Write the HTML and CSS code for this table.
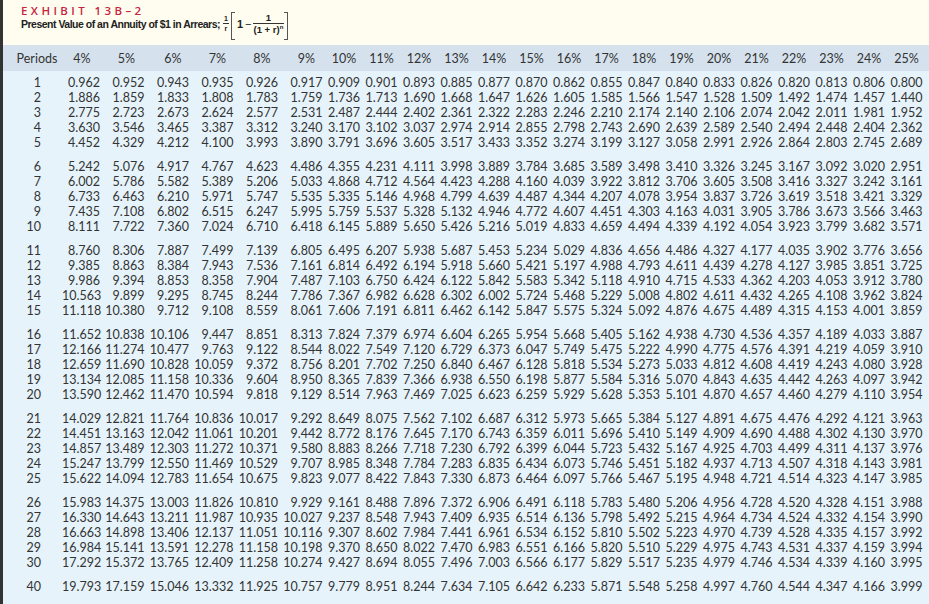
FILE: index.html
```html
<!DOCTYPE html>
<html lang="en">
<head>
<meta charset="utf-8">
<title>Exhibit 13B-2</title>
<link rel="stylesheet" href="styles.css">
</head>
<body>
<div class="sheet">
  <div class="head">
    <div class="title">EXHIBIT 13B–2</div>
    <div class="sub">
      <span class="subtext">Present Value of an Annuity of $1 in Arrears;</span>
      <span class="frac small"><span class="num">1</span><span class="den">r</span></span>
      <span class="brk left"></span>
      <span class="one">1</span>
      <span class="minus">−</span>
      <span class="frac big"><span class="num">1</span><span class="den">(1 + r)<sup>n</sup></span></span>
      <span class="brk right"></span>
    </div>
  </div>
  <div class="cols hdr">
    <span class="per">Periods</span><span>4%</span><span>5%</span><span>6%</span><span>7%</span><span>8%</span><span>9%</span><span>10%</span><span>11%</span><span>12%</span><span>13%</span><span>14%</span><span>15%</span><span>16%</span><span>17%</span><span>18%</span><span>19%</span><span>20%</span><span>21%</span><span>22%</span><span>23%</span><span>24%</span><span>25%</span>
  </div>
  <div class="tbody">
    <div class="grp">
      <div class="cols row"><span>1</span><span>0.962</span><span>0.952</span><span>0.943</span><span>0.935</span><span>0.926</span><span>0.917</span><span>0.909</span><span>0.901</span><span>0.893</span><span>0.885</span><span>0.877</span><span>0.870</span><span>0.862</span><span>0.855</span><span>0.847</span><span>0.840</span><span>0.833</span><span>0.826</span><span>0.820</span><span>0.813</span><span>0.806</span><span>0.800</span></div>
      <div class="cols row"><span>2</span><span>1.886</span><span>1.859</span><span>1.833</span><span>1.808</span><span>1.783</span><span>1.759</span><span>1.736</span><span>1.713</span><span>1.690</span><span>1.668</span><span>1.647</span><span>1.626</span><span>1.605</span><span>1.585</span><span>1.566</span><span>1.547</span><span>1.528</span><span>1.509</span><span>1.492</span><span>1.474</span><span>1.457</span><span>1.440</span></div>
      <div class="cols row"><span>3</span><span>2.775</span><span>2.723</span><span>2.673</span><span>2.624</span><span>2.577</span><span>2.531</span><span>2.487</span><span>2.444</span><span>2.402</span><span>2.361</span><span>2.322</span><span>2.283</span><span>2.246</span><span>2.210</span><span>2.174</span><span>2.140</span><span>2.106</span><span>2.074</span><span>2.042</span><span>2.011</span><span>1.981</span><span>1.952</span></div>
      <div class="cols row"><span>4</span><span>3.630</span><span>3.546</span><span>3.465</span><span>3.387</span><span>3.312</span><span>3.240</span><span>3.170</span><span>3.102</span><span>3.037</span><span>2.974</span><span>2.914</span><span>2.855</span><span>2.798</span><span>2.743</span><span>2.690</span><span>2.639</span><span>2.589</span><span>2.540</span><span>2.494</span><span>2.448</span><span>2.404</span><span>2.362</span></div>
      <div class="cols row"><span>5</span><span>4.452</span><span>4.329</span><span>4.212</span><span>4.100</span><span>3.993</span><span>3.890</span><span>3.791</span><span>3.696</span><span>3.605</span><span>3.517</span><span>3.433</span><span>3.352</span><span>3.274</span><span>3.199</span><span>3.127</span><span>3.058</span><span>2.991</span><span>2.926</span><span>2.864</span><span>2.803</span><span>2.745</span><span>2.689</span></div>
    </div>
    <div class="grp">
      <div class="cols row"><span>6</span><span>5.242</span><span>5.076</span><span>4.917</span><span>4.767</span><span>4.623</span><span>4.486</span><span>4.355</span><span>4.231</span><span>4.111</span><span>3.998</span><span>3.889</span><span>3.784</span><span>3.685</span><span>3.589</span><span>3.498</span><span>3.410</span><span>3.326</span><span>3.245</span><span>3.167</span><span>3.092</span><span>3.020</span><span>2.951</span></div>
      <div class="cols row"><span>7</span><span>6.002</span><span>5.786</span><span>5.582</span><span>5.389</span><span>5.206</span><span>5.033</span><span>4.868</span><span>4.712</span><span>4.564</span><span>4.423</span><span>4.288</span><span>4.160</span><span>4.039</span><span>3.922</span><span>3.812</span><span>3.706</span><span>3.605</span><span>3.508</span><span>3.416</span><span>3.327</span><span>3.242</span><span>3.161</span></div>
      <div class="cols row"><span>8</span><span>6.733</span><span>6.463</span><span>6.210</span><span>5.971</span><span>5.747</span><span>5.535</span><span>5.335</span><span>5.146</span><span>4.968</span><span>4.799</span><span>4.639</span><span>4.487</span><span>4.344</span><span>4.207</span><span>4.078</span><span>3.954</span><span>3.837</span><span>3.726</span><span>3.619</span><span>3.518</span><span>3.421</span><span>3.329</span></div>
      <div class="cols row"><span>9</span><span>7.435</span><span>7.108</span><span>6.802</span><span>6.515</span><span>6.247</span><span>5.995</span><span>5.759</span><span>5.537</span><span>5.328</span><span>5.132</span><span>4.946</span><span>4.772</span><span>4.607</span><span>4.451</span><span>4.303</span><span>4.163</span><span>4.031</span><span>3.905</span><span>3.786</span><span>3.673</span><span>3.566</span><span>3.463</span></div>
      <div class="cols row"><span>10</span><span>8.111</span><span>7.722</span><span>7.360</span><span>7.024</span><span>6.710</span><span>6.418</span><span>6.145</span><span>5.889</span><span>5.650</span><span>5.426</span><span>5.216</span><span>5.019</span><span>4.833</span><span>4.659</span><span>4.494</span><span>4.339</span><span>4.192</span><span>4.054</span><span>3.923</span><span>3.799</span><span>3.682</span><span>3.571</span></div>
    </div>
    <div class="grp">
      <div class="cols row"><span>11</span><span>8.760</span><span>8.306</span><span>7.887</span><span>7.499</span><span>7.139</span><span>6.805</span><span>6.495</span><span>6.207</span><span>5.938</span><span>5.687</span><span>5.453</span><span>5.234</span><span>5.029</span><span>4.836</span><span>4.656</span><span>4.486</span><span>4.327</span><span>4.177</span><span>4.035</span><span>3.902</span><span>3.776</span><span>3.656</span></div>
      <div class="cols row"><span>12</span><span>9.385</span><span>8.863</span><span>8.384</span><span>7.943</span><span>7.536</span><span>7.161</span><span>6.814</span><span>6.492</span><span>6.194</span><span>5.918</span><span>5.660</span><span>5.421</span><span>5.197</span><span>4.988</span><span>4.793</span><span>4.611</span><span>4.439</span><span>4.278</span><span>4.127</span><span>3.985</span><span>3.851</span><span>3.725</span></div>
      <div class="cols row"><span>13</span><span>9.986</span><span>9.394</span><span>8.853</span><span>8.358</span><span>7.904</span><span>7.487</span><span>7.103</span><span>6.750</span><span>6.424</span><span>6.122</span><span>5.842</span><span>5.583</span><span>5.342</span><span>5.118</span><span>4.910</span><span>4.715</span><span>4.533</span><span>4.362</span><span>4.203</span><span>4.053</span><span>3.912</span><span>3.780</span></div>
      <div class="cols row"><span>14</span><span>10.563</span><span>9.899</span><span>9.295</span><span>8.745</span><span>8.244</span><span>7.786</span><span>7.367</span><span>6.982</span><span>6.628</span><span>6.302</span><span>6.002</span><span>5.724</span><span>5.468</span><span>5.229</span><span>5.008</span><span>4.802</span><span>4.611</span><span>4.432</span><span>4.265</span><span>4.108</span><span>3.962</span><span>3.824</span></div>
      <div class="cols row"><span>15</span><span>11.118</span><span>10.380</span><span>9.712</span><span>9.108</span><span>8.559</span><span>8.061</span><span>7.606</span><span>7.191</span><span>6.811</span><span>6.462</span><span>6.142</span><span>5.847</span><span>5.575</span><span>5.324</span><span>5.092</span><span>4.876</span><span>4.675</span><span>4.489</span><span>4.315</span><span>4.153</span><span>4.001</span><span>3.859</span></div>
    </div>
    <div class="grp">
      <div class="cols row"><span>16</span><span>11.652</span><span>10.838</span><span>10.106</span><span>9.447</span><span>8.851</span><span>8.313</span><span>7.824</span><span>7.379</span><span>6.974</span><span>6.604</span><span>6.265</span><span>5.954</span><span>5.668</span><span>5.405</span><span>5.162</span><span>4.938</span><span>4.730</span><span>4.536</span><span>4.357</span><span>4.189</span><span>4.033</span><span>3.887</span></div>
      <div class="cols row"><span>17</span><span>12.166</span><span>11.274</span><span>10.477</span><span>9.763</span><span>9.122</span><span>8.544</span><span>8.022</span><span>7.549</span><span>7.120</span><span>6.729</span><span>6.373</span><span>6.047</span><span>5.749</span><span>5.475</span><span>5.222</span><span>4.990</span><span>4.775</span><span>4.576</span><span>4.391</span><span>4.219</span><span>4.059</span><span>3.910</span></div>
      <div class="cols row"><span>18</span><span>12.659</span><span>11.690</span><span>10.828</span><span>10.059</span><span>9.372</span><span>8.756</span><span>8.201</span><span>7.702</span><span>7.250</span><span>6.840</span><span>6.467</span><span>6.128</span><span>5.818</span><span>5.534</span><span>5.273</span><span>5.033</span><span>4.812</span><span>4.608</span><span>4.419</span><span>4.243</span><span>4.080</span><span>3.928</span></div>
      <div class="cols row"><span>19</span><span>13.134</span><span>12.085</span><span>11.158</span><span>10.336</span><span>9.604</span><span>8.950</span><span>8.365</span><span>7.839</span><span>7.366</span><span>6.938</span><span>6.550</span><span>6.198</span><span>5.877</span><span>5.584</span><span>5.316</span><span>5.070</span><span>4.843</span><span>4.635</span><span>4.442</span><span>4.263</span><span>4.097</span><span>3.942</span></div>
      <div class="cols row"><span>20</span><span>13.590</span><span>12.462</span><span>11.470</span><span>10.594</span><span>9.818</span><span>9.129</span><span>8.514</span><span>7.963</span><span>7.469</span><span>7.025</span><span>6.623</span><span>6.259</span><span>5.929</span><span>5.628</span><span>5.353</span><span>5.101</span><span>4.870</span><span>4.657</span><span>4.460</span><span>4.279</span><span>4.110</span><span>3.954</span></div>
    </div>
    <div class="grp">
      <div class="cols row"><span>21</span><span>14.029</span><span>12.821</span><span>11.764</span><span>10.836</span><span>10.017</span><span>9.292</span><span>8.649</span><span>8.075</span><span>7.562</span><span>7.102</span><span>6.687</span><span>6.312</span><span>5.973</span><span>5.665</span><span>5.384</span><span>5.127</span><span>4.891</span><span>4.675</span><span>4.476</span><span>4.292</span><span>4.121</span><span>3.963</span></div>
      <div class="cols row"><span>22</span><span>14.451</span><span>13.163</span><span>12.042</span><span>11.061</span><span>10.201</span><span>9.442</span><span>8.772</span><span>8.176</span><span>7.645</span><span>7.170</span><span>6.743</span><span>6.359</span><span>6.011</span><span>5.696</span><span>5.410</span><span>5.149</span><span>4.909</span><span>4.690</span><span>4.488</span><span>4.302</span><span>4.130</span><span>3.970</span></div>
      <div class="cols row"><span>23</span><span>14.857</span><span>13.489</span><span>12.303</span><span>11.272</span><span>10.371</span><span>9.580</span><span>8.883</span><span>8.266</span><span>7.718</span><span>7.230</span><span>6.792</span><span>6.399</span><span>6.044</span><span>5.723</span><span>5.432</span><span>5.167</span><span>4.925</span><span>4.703</span><span>4.499</span><span>4.311</span><span>4.137</span><span>3.976</span></div>
      <div class="cols row"><span>24</span><span>15.247</span><span>13.799</span><span>12.550</span><span>11.469</span><span>10.529</span><span>9.707</span><span>8.985</span><span>8.348</span><span>7.784</span><span>7.283</span><span>6.835</span><span>6.434</span><span>6.073</span><span>5.746</span><span>5.451</span><span>5.182</span><span>4.937</span><span>4.713</span><span>4.507</span><span>4.318</span><span>4.143</span><span>3.981</span></div>
      <div class="cols row"><span>25</span><span>15.622</span><span>14.094</span><span>12.783</span><span>11.654</span><span>10.675</span><span>9.823</span><span>9.077</span><span>8.422</span><span>7.843</span><span>7.330</span><span>6.873</span><span>6.464</span><span>6.097</span><span>5.766</span><span>5.467</span><span>5.195</span><span>4.948</span><span>4.721</span><span>4.514</span><span>4.323</span><span>4.147</span><span>3.985</span></div>
    </div>
    <div class="grp">
      <div class="cols row"><span>26</span><span>15.983</span><span>14.375</span><span>13.003</span><span>11.826</span><span>10.810</span><span>9.929</span><span>9.161</span><span>8.488</span><span>7.896</span><span>7.372</span><span>6.906</span><span>6.491</span><span>6.118</span><span>5.783</span><span>5.480</span><span>5.206</span><span>4.956</span><span>4.728</span><span>4.520</span><span>4.328</span><span>4.151</span><span>3.988</span></div>
      <div class="cols row"><span>27</span><span>16.330</span><span>14.643</span><span>13.211</span><span>11.987</span><span>10.935</span><span>10.027</span><span>9.237</span><span>8.548</span><span>7.943</span><span>7.409</span><span>6.935</span><span>6.514</span><span>6.136</span><span>5.798</span><span>5.492</span><span>5.215</span><span>4.964</span><span>4.734</span><span>4.524</span><span>4.332</span><span>4.154</span><span>3.990</span></div>
      <div class="cols row"><span>28</span><span>16.663</span><span>14.898</span><span>13.406</span><span>12.137</span><span>11.051</span><span>10.116</span><span>9.307</span><span>8.602</span><span>7.984</span><span>7.441</span><span>6.961</span><span>6.534</span><span>6.152</span><span>5.810</span><span>5.502</span><span>5.223</span><span>4.970</span><span>4.739</span><span>4.528</span><span>4.335</span><span>4.157</span><span>3.992</span></div>
      <div class="cols row"><span>29</span><span>16.984</span><span>15.141</span><span>13.591</span><span>12.278</span><span>11.158</span><span>10.198</span><span>9.370</span><span>8.650</span><span>8.022</span><span>7.470</span><span>6.983</span><span>6.551</span><span>6.166</span><span>5.820</span><span>5.510</span><span>5.229</span><span>4.975</span><span>4.743</span><span>4.531</span><span>4.337</span><span>4.159</span><span>3.994</span></div>
      <div class="cols row"><span>30</span><span>17.292</span><span>15.372</span><span>13.765</span><span>12.409</span><span>11.258</span><span>10.274</span><span>9.427</span><span>8.694</span><span>8.055</span><span>7.496</span><span>7.003</span><span>6.566</span><span>6.177</span><span>5.829</span><span>5.517</span><span>5.235</span><span>4.979</span><span>4.746</span><span>4.534</span><span>4.339</span><span>4.160</span><span>3.995</span></div>
    </div>
    <div class="grp">
      <div class="cols row"><span>40</span><span>19.793</span><span>17.159</span><span>15.046</span><span>13.332</span><span>11.925</span><span>10.757</span><span>9.779</span><span>8.951</span><span>8.244</span><span>7.634</span><span>7.105</span><span>6.642</span><span>6.233</span><span>5.871</span><span>5.548</span><span>5.258</span><span>4.997</span><span>4.760</span><span>4.544</span><span>4.347</span><span>4.166</span><span>3.999</span></div>
    </div>
  </div>
</div>
</body>
</html>
```

FILE: styles.css
```css
* { box-sizing: border-box; margin: 0; padding: 0; }

body {
  width: 929px;
  height: 604px;
  overflow: hidden;
  background: #e6f3fb;
  font-family: Lato, "Open Sans", sans-serif;
  font-size: 12.5px;
  color: #333;
}

.sheet {
  height: 604px;
  border-left: 3px solid #333;
  display: flex;
  flex-direction: column;
}

.head {
  height: 45px;
  flex: none;
  background: #fffdf0;
  padding: 5px 0 0 18px;
}

.title {
  font-family: "Open Sans", sans-serif;
  font-size: 11.5px;
  line-height: 12px;
  font-weight: 600;
  letter-spacing: 3.4px;
  color: #c6243f;
}

.sub {
  display: flex;
  align-items: center;
  height: 28px;
  margin-top: -5px;
  font-family: "Liberation Sans Narrow", "Liberation Sans", sans-serif;
  font-weight: 700;
  font-size: 10.5px;
  color: #222;
}

.subtext {
  letter-spacing: -0.5px;
  margin: 0 3px 5px 0;
}

.frac {
  display: inline-flex;
  flex-direction: column;
  align-items: center;
  line-height: 1;
  margin-bottom: 5px;
}

.frac .num { padding: 0 1px 1px; border-bottom: 1px solid #333; }
.frac .den { padding-top: 1px; }

.frac.small { font-size: 7px; margin-right: 2px; }
.frac.big { font-size: 9.5px; margin-left: 1px; }
.frac.big .num { align-self: stretch; text-align: center; }
.frac.big .den { padding: 1px 1px 0; }
.frac sup { font-size: 6px; vertical-align: 4px; line-height: 0; }

.brk {
  width: 4px;
  height: 28px;
  border: 1px solid #555;
}
.brk.left { border-right: none; margin-right: 2px; }
.brk.right { border-left: none; }

.one { margin: 0 2px 5px 0; font-size: 11px; }
.minus { font-weight: 400; margin-bottom: 5px; font-size: 11px; }

.cols {
  display: grid;
  grid-template-columns: 50px 38px repeat(5, 44.5px) repeat(16, 37.5px);
  padding-left: 9px;
}

.hdr {
  flex: none;
  height: 26px;
  align-items: center;
  background: #d5e2ee;
}

.hdr span {
  justify-self: end;
  width: 32px;
  text-align: center;
  white-space: nowrap;
}

.hdr span:nth-child(2),
.hdr span:nth-child(3) { margin-right: 2px; }

.hdr .per {
  justify-self: stretch;
  width: auto;
}

.tbody {
  flex: 1;
  padding-top: 4px;
}

.grp + .grp { margin-top: 9px; }

.row {
  height: 15px;
  line-height: 15px;
}

.row span {
  text-align: right;
  white-space: nowrap;
}

.row span:first-child { padding-right: 21px; }
```
